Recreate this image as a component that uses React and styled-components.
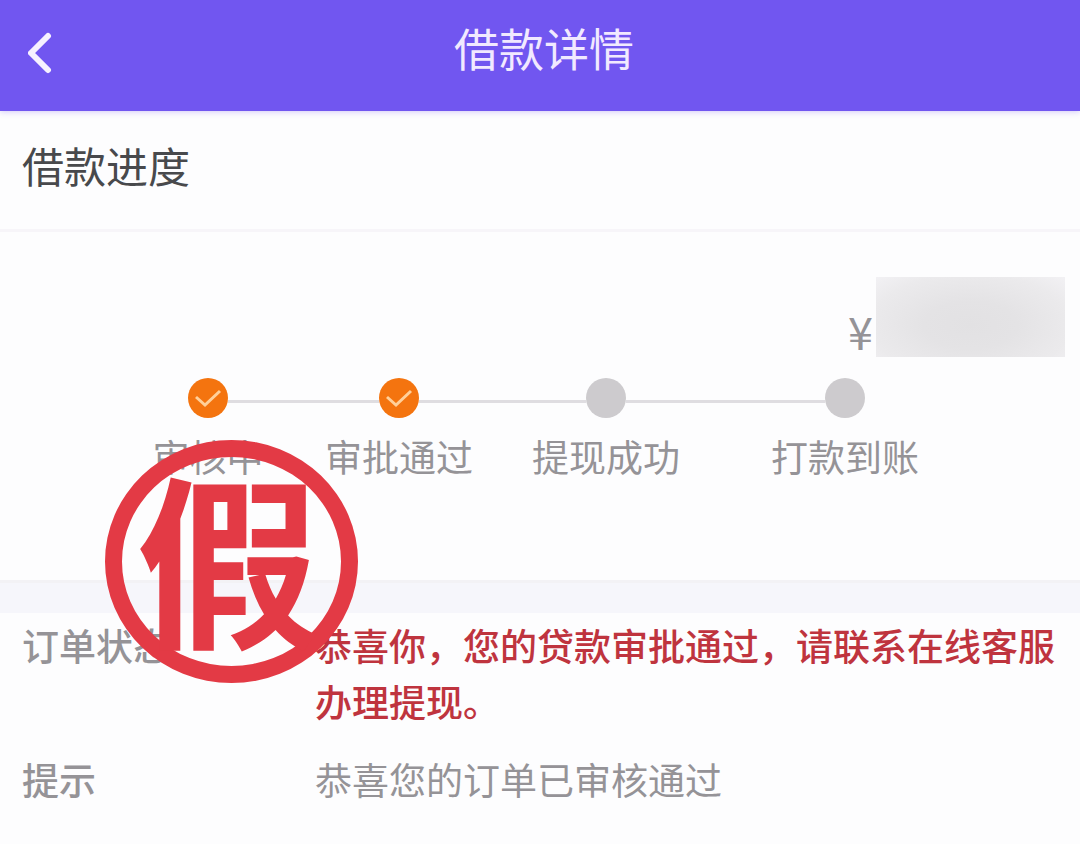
import React from 'react'
import styled, { createGlobalStyle } from 'styled-components'

const GlobalStyle = createGlobalStyle`
    * {
        box-sizing: border-box;
    }

    body {
        margin: 0;
        background: #fdfdfe;
        font-family: "Noto Sans CJK SC", "Noto Sans", sans-serif;
        font-size: 37px;
        color: #959397;
    }
`;

const Header = styled.header`
    display: grid;
    grid-template-columns: 1fr auto 1fr;
    align-items: center;
    height: 111px;
    padding: 0 20px 6px 28px;
    background: #7156f0;
    box-shadow: 0 1px 6px #7156f04d;
`;

const BackButton = styled.button`
    display: flex;
    justify-self: start;
    padding: 0;
    border: 0;
    background: none;
    color: #f6f1ff;
    cursor: pointer;
`;

const Title = styled.h1`
    margin: 0;
    padding-bottom: 10px;
    font-size: 45px;
    font-weight: 400;
    line-height: 56px;
    color: #f1e9ff;
`;

const SectionTitle = styled.h2`
    margin: 0;
    padding: 26px 22px 36px;
    border-bottom: 3px solid #f7f5f9;
    font-size: 42px;
    font-weight: 400;
    line-height: 56px;
    color: #48494c;
`;

const Progress = styled.section`
    position: relative;
    padding: 45px 0 96px;
    border-bottom: 3px solid #f3f2f5;
`;

const Amount = styled.div`
    display: flex;
    justify-content: flex-end;
    align-items: flex-end;
    gap: 3px;
    height: 80px;
    padding-right: 15px;
    font-size: 45px;
    line-height: 52px;
`;

const HiddenAmount = styled.span`
    width: 189px;
    height: 80px;
    background: radial-gradient(ellipse at 50% 60%, #e2e1e3 0%, #e4e3e5 35%, #ebeaec 75%, #f2f1f4 100%);
`;

const Steps = styled.ol`
    display: grid;
    grid-template-columns: 192fr 190fr 224fr 254fr;
    margin: 0;
    padding: 21px 108px 0 112px;
    list-style: none;
`;

const Step = styled.li`
    display: flex;
    flex-direction: column;
    gap: 10px;
    text-align: center;
    line-height: 56px;
`;

const Track = styled.div`
    display: flex;
    align-items: center;
`;

const Line = styled.span`
    flex: 1;
    height: 3px;
    margin-top: 6px;
    background: ${props => props.$hidden ? 'transparent' : '#dfdde1'};
`;

const Dot = styled.span`
    display: flex;
    align-items: center;
    justify-content: center;
    width: 40px;
    height: 40px;
    border-radius: 50%;
    background: ${props => props.$done ? '#f4740f' : '#cdcbce'};
`;

const Stamp = styled.div`
    position: absolute;
    z-index: 1;
    top: 208px;
    left: 105px;
    display: flex;
    align-items: center;
    justify-content: center;
    width: 253px;
    height: 243px;
    padding: 0 6px 16px 0;
    border: 17px solid #e33a45;
    border-radius: 50%;
    font-size: 184px;
    font-weight: 700;
    line-height: 184px;
    color: #e33a45;
`;

const Divider = styled.div`
    height: 30px;
    background: #f6f6fb;
`;

const Details = styled.dl`
    display: grid;
    grid-template-columns: 293px 1fr;
    row-gap: 22px;
    margin: 0;
    padding: 4px 22px 34px;
    line-height: 56px;
`;

const Label = styled.dt`
    font-weight: 500;
`;

const Value = styled.dd`
    margin: 0;
    font-weight: ${props => props.$alert ? 500 : 400};
    color: ${props => props.$alert ? '#bf343e' : 'inherit'};
`;

const steps = [
    { name: '审核中', done: true },
    { name: '审批通过', done: true },
    { name: '提现成功', done: false },
    { name: '打款到账', done: false },
]

function BackIcon() {
    return (
        <svg width="24" height="42" viewBox="0 0 24 42" fill="none" stroke="currentColor" strokeWidth="6" strokeLinecap="round" strokeLinejoin="round" aria-hidden="true">
            <path d="M20 4L3 21L20 38" />
        </svg>
    )
}

function CheckIcon() {
    return (
        <svg width="28" height="20" viewBox="0 0 28 20" fill="none" stroke="#ffd09a" strokeWidth="3" aria-hidden="true">
            <path d="M2 9L11 17L26 3" />
        </svg>
    )
}

function App() {
    return (
        <>
            <GlobalStyle />
            <Header>
                <BackButton type="button" aria-label="返回"><BackIcon /></BackButton>
                <Title>借款详情</Title>
            </Header>
            <main>
                <SectionTitle>借款进度</SectionTitle>
                <Progress>
                    <Amount>¥<HiddenAmount /></Amount>
                    <Steps>
                        {steps.map((step, i) => (
                            <Step key={step.name}>
                                <Track>
                                    <Line $hidden={i === 0} />
                                    <Dot $done={step.done}>{step.done && <CheckIcon />}</Dot>
                                    <Line $hidden={i === steps.length - 1} />
                                </Track>
                                {step.name}
                            </Step>
                        ))}
                    </Steps>
                    <Stamp>假</Stamp>
                </Progress>
                <Divider />
                <Details>
                    <Label>订单状态</Label>
                    <Value $alert>恭喜你，您的贷款审批通过，请联系在线客服办理提现。</Value>
                    <Label>提示</Label>
                    <Value>恭喜您的订单已审核通过</Value>
                </Details>
            </main>
        </>
    )
}

export default App
